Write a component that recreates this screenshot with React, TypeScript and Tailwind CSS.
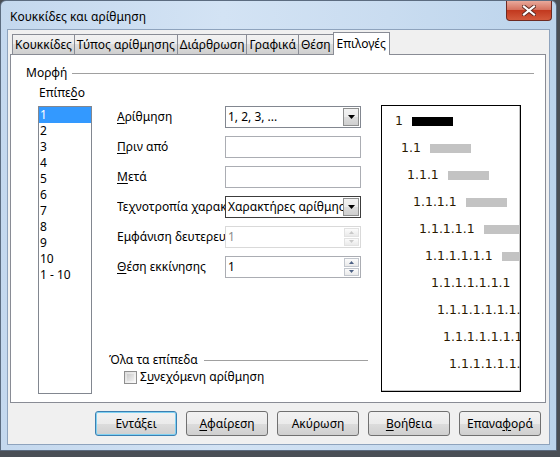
import React from 'react';

const font = { fontFamily: '"Noto Sans", "DejaVu Sans", sans-serif' };

function U({ children }: { children: React.ReactNode }) {
    return <span className="underline underline-offset-2">{children}</span>;
}

function DropArrow() {
    return (
        <div className="w-[16px] h-full flex items-center justify-center border border-[#8e8f8f] bg-[linear-gradient(#f2f2f2,#ebebeb_50%,#dddddd_50%,#cfcfcf)]">
            <svg width="7" height="4" viewBox="0 0 7 4">
                <path d="M0 0h7L3.5 4z" fill="#000" />
            </svg>
        </div>
    );
}

function Spinner({ disabled }: { disabled?: boolean }) {
    const c = disabled ? '#c9c9c9' : '#4d6185';
    const b = disabled ? 'border-[#e2e2e2]' : 'border-[#c2c6cd]';
    return (
        <div className="flex flex-col w-[15px] h-full gap-px">
            <div className={`flex-1 flex items-center justify-center border ${b} bg-[linear-gradient(#fbfbfb,#eaeaea)]`}>
                <svg width="5" height="3" viewBox="0 0 5 3"><path d="M2.5 0L5 3H0z" fill={c} /></svg>
            </div>
            <div className={`flex-1 flex items-center justify-center border ${b} bg-[linear-gradient(#fbfbfb,#eaeaea)]`}>
                <svg width="5" height="3" viewBox="0 0 5 3"><path d="M0 0h5L2.5 3z" fill={c} /></svg>
            </div>
        </div>
    );
}

const tabs = ['Κουκκίδες', 'Τύπος αρίθμησης', 'Διάρθρωση', 'Γραφικά', 'Θέση'];
const levels = ['1', '2', '3', '4', '5', '6', '7', '8', '9', '10', '1 - 10'];
const buttons: React.ReactNode[] = [
    'Εντάξει',
    <><U>Α</U>φαίρεση</>,
    'Ακύρωση',
    <><U>Β</U>οήθεια</>,
    <>Επανα<U>φ</U>ορά</>,
];

export default function App() {
    return (
        <div className="w-[560px] h-[457px] bg-[#4a4f56] text-[12px] text-black overflow-hidden" style={font}>
            <div className="w-[557px] h-[451px] flex flex-col rounded-t-[6px] border border-[#5c6c80] bg-[linear-gradient(90deg,#c4d8ee,#d3e3f4_40%,#c9dcf0_70%,#bcd4ec)]">
                {/* title bar */}
                <div className="h-[28px] flex items-start shrink-0">
                    <div className="pl-[9px] pt-[7px] text-[12px] text-black">Κουκκίδες και αρίθμηση</div>
                    <div className="ml-auto mr-[4px] w-[46px] h-[20px] rounded-b-[4px] border border-t-0 border-[#6e2a22] bg-[linear-gradient(#e9a99b,#d57360_45%,#c2391f_50%,#d35a3c)] flex items-center justify-center">
                        <svg width="14" height="11" viewBox="0 0 14 11">
                            <path d="M2 1.5l10 8M12 1.5l-10 8" stroke="#5d2a22" strokeWidth="4" strokeLinecap="square" />
                            <path d="M2 1.5l10 8M12 1.5l-10 8" stroke="#fff" strokeWidth="2.2" strokeLinecap="square" />
                        </svg>
                    </div>
                </div>

                {/* client area */}
                <div className="mx-[6px] mb-[5px] flex-1 flex flex-col bg-[#f0f0f0] border border-[#8ea3bd] pt-[2px] px-[2px]">
                    {/* tabs */}
                    <div className="flex items-end h-[22px] pl-[2px]">
                        {tabs.map((t, i) => (
                            <div
                                key={t}
                                className={`h-[20px] px-[2px] ${i > 0 ? '-ml-px' : ''} border border-b-0 border-[#898c95] bg-[linear-gradient(#f2f2f2,#ebebeb_50%,#dddddd_50%,#cfcfcf)] flex items-center leading-none`}
                            >
                                {t}
                            </div>
                        ))}
                        <div className="h-[23px] px-[3px] -ml-px -mb-px relative z-10 border border-b-0 border-[#898c95] bg-white flex items-center leading-none">
                            Επιλογές
                        </div>
                    </div>

                    {/* panel */}
                    <div className="h-[349px] w-[536px] bg-white border border-[#898c95] flex flex-col">
                        <div className="flex items-center pl-[15px] pr-[11px] pt-[9px]">
                            <span>Μορφή</span>
                            <div className="flex-1 h-px bg-[#a0a0a0] ml-[5px]" />
                        </div>
                        <div className="flex pl-[27px] mt-[-2px]">
                            {/* level list */}
                            <div className="flex flex-col w-[54px]">
                                <div className="h-[26px] flex items-center pl-px">
                                    <span>Επίπε<U>δ</U>ο</span>
                                </div>
                                <div className="h-[288px] border border-[#828790] bg-white">
                                    {levels.map((l, i) => (
                                        <div key={l} className={`h-[16px] leading-[16px] pl-px ${i === 0 ? 'bg-[#3399ff] text-white' : ''}`}>
                                            {l}
                                        </div>
                                    ))}
                                </div>
                            </div>

                            {/* form */}
                            <div className="w-[259px] ml-[17px] pt-[26px] flex flex-col">
                                <div className="flex flex-col gap-[8px] pl-[8px]">
                                    <div className="flex items-center h-[22px]">
                                        <div className="w-[108px] whitespace-nowrap overflow-hidden"><U>Α</U>ρίθμηση</div>
                                        <div className="w-[136px] h-[22px] border border-[#828790] bg-white flex items-center p-px">
                                            <span className="flex-1 pl-px">1, 2, 3, ...</span>
                                            <DropArrow />
                                        </div>
                                    </div>
                                    <div className="flex items-center h-[22px]">
                                        <div className="w-[108px] whitespace-nowrap overflow-hidden"><U>Π</U>ριν από</div>
                                        <div className="w-[136px] h-[22px] border border-[#abadb3] bg-white" />
                                    </div>
                                    <div className="flex items-center h-[22px]">
                                        <div className="w-[108px] whitespace-nowrap overflow-hidden"><U>Μ</U>ετά</div>
                                        <div className="w-[136px] h-[22px] border border-[#abadb3] bg-white" />
                                    </div>
                                    <div className="flex items-center h-[22px]">
                                        <div className="w-[108px] whitespace-nowrap overflow-hidden">Τεχνοτροπία χαρακτήρων</div>
                                        <div className="w-[136px] h-[22px] border border-[#3c3c3c] bg-white flex items-center p-px">
                                            <span className="flex-1 whitespace-nowrap overflow-hidden pl-px">Χαρακτήρες αρίθμησης</span>
                                            <DropArrow />
                                        </div>
                                    </div>
                                    <div className="flex items-center h-[22px]">
                                        <div className="w-[108px] whitespace-nowrap overflow-hidden">Εμφάνιση δευτερευόντων επιπέδων</div>
                                        <div className="w-[136px] h-[22px] border border-[#d9d9d9] bg-white flex items-center p-px">
                                            <span className="flex-1 pl-px text-[#8d8d8d]">1</span>
                                            <Spinner disabled />
                                        </div>
                                    </div>
                                    <div className="flex items-center h-[22px]">
                                        <div className="w-[108px] whitespace-nowrap overflow-hidden"><U>Θ</U>έση εκκίνησης</div>
                                        <div className="w-[136px] h-[22px] border border-[#abadb3] bg-white flex items-center p-px">
                                            <span className="flex-1 pl-px">1</span>
                                            <Spinner />
                                        </div>
                                    </div>
                                </div>

                                <div className="mt-[73px] flex items-center">
                                    <span>Όλα τα επίπεδα</span>
                                    <div className="flex-1 h-px bg-[#a0a0a0] ml-[6px]" />
                                </div>
                                <div className="flex items-center mt-[-1px] pl-[15px]">
                                    <div className="w-[13px] h-[13px] border border-[#8f8f8f] bg-[linear-gradient(135deg,#dcdcdc,#fbfbfb)] p-[2px]">
                                        <div className="w-full h-full bg-[linear-gradient(135deg,#cbcbcb,#f0f0f0)]" />
                                    </div>
                                    <span className="ml-[3px]">Σ<U>υ</U>νεχόμενη αρίθμηση</span>
                                </div>
                            </div>

                            {/* preview */}
                            <div className="ml-[13px] mt-[25px] w-[140px] h-[287px] border border-black bg-white shadow-[inset_-1px_-1px_0_#c4c4c4] overflow-hidden pt-[2px]">
                                {Array.from({ length: 10 }).map((_, i) => {
                                    const label = Array.from({ length: i + 1 }, () => '1').join('.');
                                    return (
                                        <div key={i} className="h-[27px] flex items-center whitespace-nowrap" style={{ paddingLeft: 13 + i * 6 }}>
                                            <span className="text-[12.5px] text-[#2b1800]" style={{ fontFamily: '"DejaVu Sans", sans-serif' }}>
                                                {label}
                                            </span>
                                            {i < 6 && (
                                                <div className={`ml-[9px] w-[41px] h-[9px] shrink-0 ${i === 0 ? 'bg-black' : 'bg-[#c3c3c3]'}`} />
                                            )}
                                        </div>
                                    );
                                })}
                            </div>
                        </div>
                    </div>

                    {/* buttons */}
                    <div className="flex justify-end gap-[9px] pr-[6px] pt-[8px]">
                        {buttons.map((b, i) => (
                            <div
                                key={i}
                                className={`w-[82px] h-[25px] rounded-[3px] flex items-center justify-center border bg-[linear-gradient(#f2f2f2,#ebebeb_50%,#dddddd_50%,#cfcfcf)] ${
                                    i === 0 ? 'border-[#3c7fb1] shadow-[inset_0_0_0_1px_#7fd1f2]' : 'border-[#707070]'
                                }`}
                            >
                                {b}
                            </div>
                        ))}
                    </div>
                </div>
            </div>
        </div>
    );
}
